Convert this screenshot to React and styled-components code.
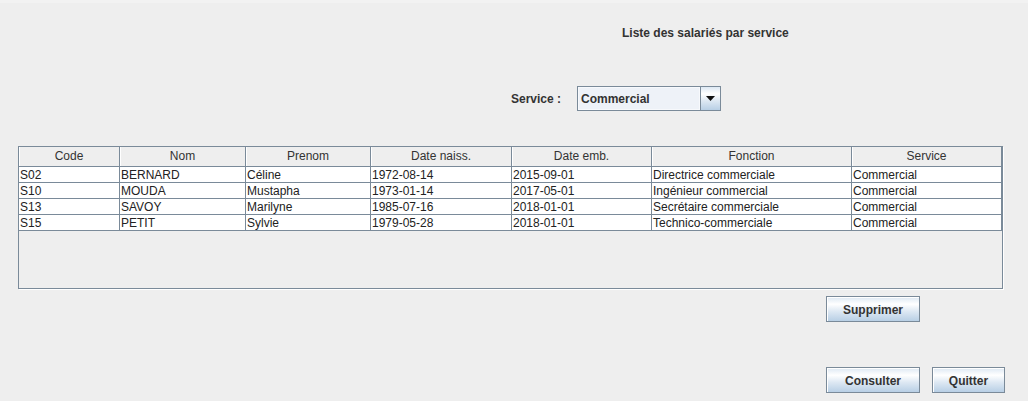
import styled, { createGlobalStyle } from "styled-components";

const GlobalStyle = createGlobalStyle`
    html, body {
        margin: 0;
        padding: 0;
        background: #eeeeee;
    }
    body {
        font-family: "Liberation Sans", Arial, sans-serif;
        font-size: 12px;
        color: #333333;
    }
`;

const employees = [
    { code: "S02", nom: "BERNARD", prenom: "Céline", naiss: "1972-08-14", emb: "2015-09-01", fonction: "Directrice commerciale", service: "Commercial" },
    { code: "S10", nom: "MOUDA", prenom: "Mustapha", naiss: "1973-01-14", emb: "2017-05-01", fonction: "Ingénieur commercial", service: "Commercial" },
    { code: "S13", nom: "SAVOY", prenom: "Marilyne", naiss: "1985-07-16", emb: "2018-01-01", fonction: "Secrétaire commerciale", service: "Commercial" },
    { code: "S15", nom: "PETIT", prenom: "Sylvie", naiss: "1979-05-28", emb: "2018-01-01", fonction: "Technico-commerciale", service: "Commercial" },
];

const columns = [
    { label: "Code", width: 101 },
    { label: "Nom", width: 126 },
    { label: "Prenom", width: 125 },
    { label: "Date naiss.", width: 141 },
    { label: "Date emb.", width: 140 },
    { label: "Fonction", width: 200 },
    { label: "Service", width: 150 },
];

const App = () => {
    return (
        <SFrame>
            <GlobalStyle />
            <Title>Liste des salariés par service</Title>

            <ServiceRow>
                <Label>Service :</Label>
                <Combo>
                    <ComboValue>Commercial</ComboValue>
                    <ComboArrow>
                        <svg width="9" height="5" viewBox="0 0 9 5">
                            <path d="M0 0 H9 L4.5 5 Z" fill="#111" />
                        </svg>
                    </ComboArrow>
                </Combo>
            </ServiceRow>

            <ScrollPane>
                <Table>
                    <colgroup>
                        {columns.map((c) => <col key={c.label} style={{ width: c.width }} />)}
                    </colgroup>
                    <thead>
                        <tr>
                            {columns.map((c) => <Th key={c.label}>{c.label}</Th>)}
                        </tr>
                    </thead>
                    <tbody>
                        {employees.map((e) => (
                            <tr key={e.code}>
                                <Td>{e.code}</Td>
                                <Td>{e.nom}</Td>
                                <Td>{e.prenom}</Td>
                                <Td>{e.naiss}</Td>
                                <Td>{e.emb}</Td>
                                <Td>{e.fonction}</Td>
                                <Td>{e.service}</Td>
                            </tr>
                        ))}
                    </tbody>
                </Table>
            </ScrollPane>

            <ButtonRow $top={7}>
                <Button $width={94}>Supprimer</Button>
            </ButtonRow>
            <ButtonRow $top={45}>
                <Button $width={94}>Consulter</Button>
                <Button $width={73}>Quitter</Button>
            </ButtonRow>
        </SFrame>
    );
};

const SFrame = styled.div`
    width: 1028px;
    height: 401px;
    display: flex;
    flex-direction: column;
    box-sizing: border-box;
    background: #eeeeee;
    border-top: 3px solid #f2f2f2;
`;

const Title = styled.div`
    padding-left: 622px;
    padding-top: 23px;
    line-height: 14px;
    font-weight: bold;
    color: #333333;
`;

const ServiceRow = styled.div`
    display: flex;
    align-items: center;
    padding-left: 511px;
    margin-top: 46px;
`;

const Label = styled.span`
    width: 66px;
    font-weight: bold;
    color: #333333;
`;

const Combo = styled.div`
    width: 144px;
    height: 25px;
    box-sizing: border-box;
    display: flex;
    border: 1px solid #7a8a99;
    background: #ffffff;
`;

const ComboValue = styled.div`
    flex: 1;
    display: flex;
    align-items: center;
    padding-left: 2px;
    font-weight: bold;
    color: #333333;
    background: #eef2f8;
    border: 1px solid #f7f9fc;
`;

const ComboArrow = styled.div`
    width: 19px;
    display: flex;
    align-items: center;
    justify-content: center;
    border-left: 1px solid #7a8a99;
    background: linear-gradient(#dde8f3 0%, #ffffff 30%, #dde8f3 60%, #b8cfe5 100%);
`;

const ScrollPane = styled.div`
    margin-top: 35px;
    margin-left: 18px;
    width: 985px;
    height: 143px;
    box-sizing: border-box;
    border: 1px solid #7a8a99;
    box-shadow: 1px 1px 0 #ffffff;
    background: #eeeeee;
    overflow: hidden;
`;

const Table = styled.table`
    table-layout: fixed;
    border-collapse: separate;
    border-spacing: 0;
    width: 983px;
`;

const Th = styled.th`
    box-sizing: border-box;
    height: 20px;
    padding: 0 0 1px;
    font-weight: normal;
    text-align: center;
    color: #333333;
    background: #eeeeee;
    border-right: 1px solid #7a8a99;
    border-bottom: 1px solid #7a8a99;
    box-shadow: inset 1px 0 0 #ffffff;
`;

const Td = styled.td`
    box-sizing: border-box;
    height: 16px;
    padding: 1px 0 0 1px;
    line-height: 14px;
    color: #222222;
    background: #ffffff;
    white-space: nowrap;
    overflow: hidden;
    border-right: 1px solid #7a8a99;
    border-bottom: 1px solid #7a8a99;
`;

const ButtonRow = styled.div`
    display: flex;
    gap: 12px;
    padding-left: 826px;
    margin-top: ${(p) => p.$top}px;
`;

const Button = styled.button`
    width: ${(p) => p.$width}px;
    height: 26px;
    box-sizing: border-box;
    padding: 1px 0 0;
    font-family: "Liberation Sans", Arial, sans-serif;
    font-size: 12px;
    font-weight: bold;
    color: #333333;
    border: 1px solid #7a8a99;
    box-shadow: inset 1px 1px 0 #ffffff;
    background: linear-gradient(#dde8f3 0%, #ffffff 30%, #dde8f3 60%, #b8cfe5 100%);
    cursor: pointer;
`;

export default App;
